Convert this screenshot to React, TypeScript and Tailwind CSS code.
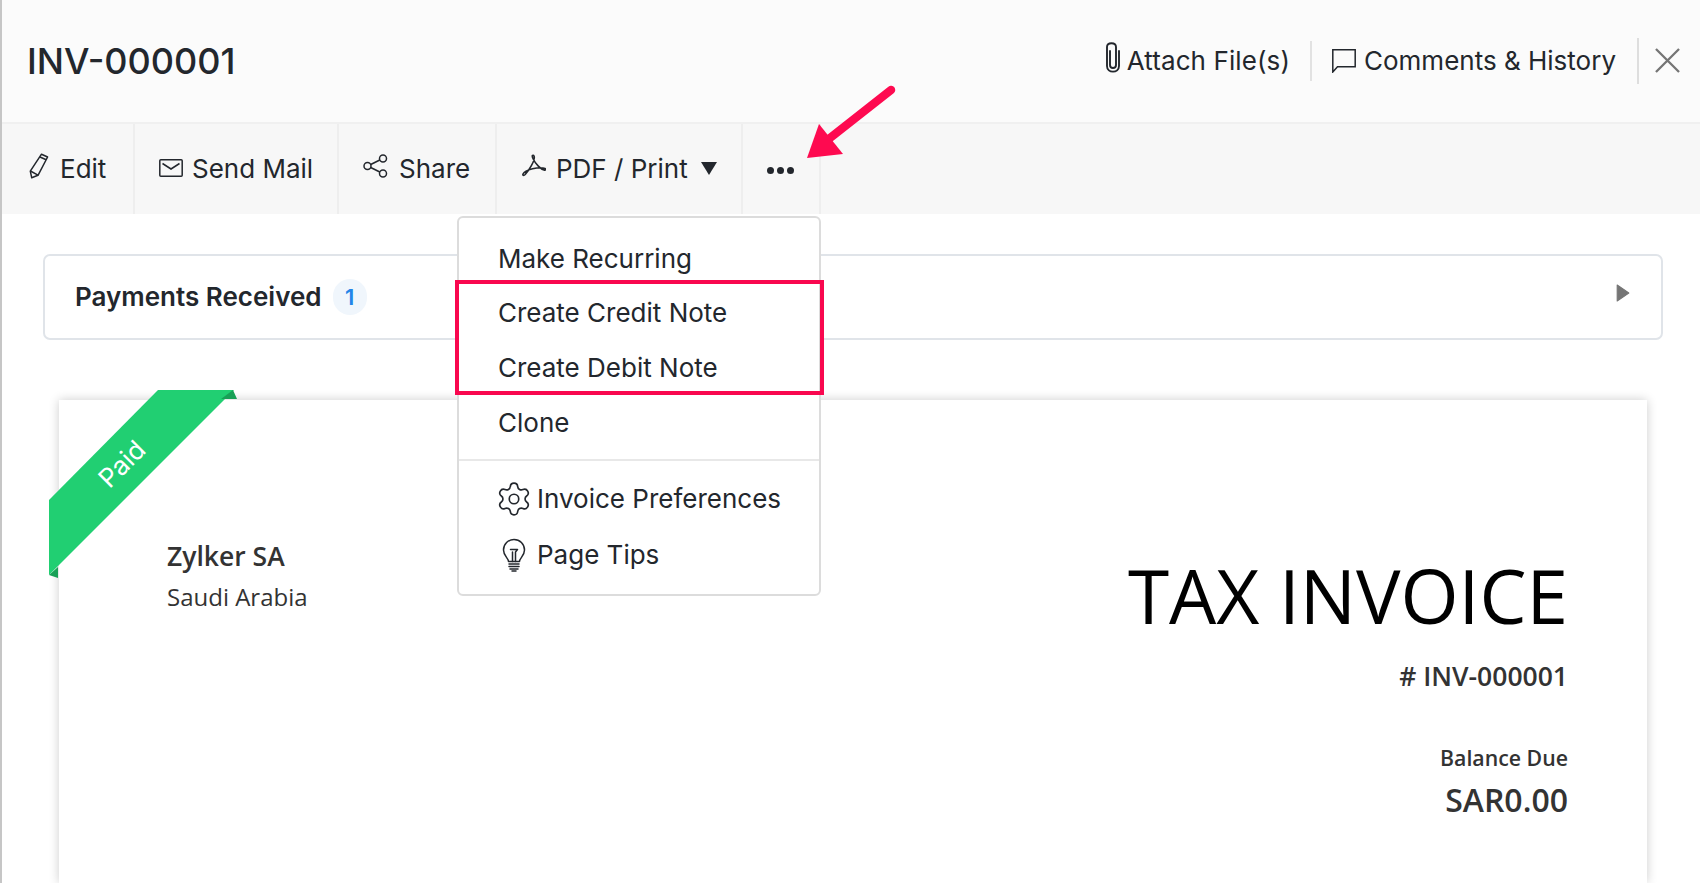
import React from "react";

const Pencil = () => (
  <svg width="20" height="26" viewBox="0 0 20 26" fill="none" stroke="#23272d" strokeWidth="1.5" strokeLinejoin="round" className="-mt-[4px] shrink-0">
    <path d="M12.5 1.2 18.6 4 9 22.3l-6.3 2.4-1.4-6.6z" />
    <path d="M11 4 17.2 6.8M1.4 18l7.6 4.200" />
  </svg>
);
const Mail = () => (
  <svg width="24" height="18" viewBox="0 0 24 18" fill="none" stroke="#23272d" strokeWidth="1.5" className="shrink-0">
    <rect x="0.8" y="0.8" width="22.4" height="16.4" rx="1" />
    <path d="M3.5 4.5 12 10l8.5-5.500" />
  </svg>
);
const Share = () => (
  <svg width="25" height="24" viewBox="0 0 25 24" fill="none" stroke="#23272d" strokeWidth="1.5" className="-mt-[4px] shrink-0">
    <circle cx="4.500" cy="12" r="3.500" />
    <circle cx="20" cy="4.500" r="3.500" />
    <circle cx="20" cy="19.500" r="3.500" />
    <path d="M7.700 10.500 16.800 6M7.700 13.500l9.100 4.500" />
  </svg>
);
const Pdf = () => (
  <svg width="24" height="24" viewBox="0 0 24 24" fill="none" stroke="#23272d" strokeWidth="1.6" strokeLinejoin="round" className="-mt-[4px] shrink-0">
    <path d="M10.500 1.500c1.500-.5 2 1 1.700 3-.4 3.500-4.500 11-9 16-1.500 1.500-2.800.8-2.200-.5 1-2 5-4 9.500-5.200 4.500-1 10-1.300 12.500-.3 1.500.7.600 2-1 1.500-3-.8-8.500-6-10.800-11-1-2-1.500-3-.7-3.500z" />
  </svg>
);
const Clip = () => (
  <svg width="16" height="31" viewBox="0 0 15 31" fill="none" stroke="#23272d" strokeWidth="1.900" strokeLinecap="round" className="shrink-0">
    <path d="M4.500 9v14c0 4 6 4 6 0V5c0-5-9-5-9 0v19c0 7.500 12 7.500 12 0V9" />
  </svg>
);
const Comment = () => (
  <svg width="24" height="24" viewBox="0 0 24 24" fill="none" stroke="#23272d" strokeWidth="1.500" strokeLinejoin="miter" className="shrink-0">
    <path d="M.8.800h22.400v17H5.500L.8 23z" />
  </svg>
);
const Gear = () => (
  <svg width="38" height="38" viewBox="0 0 24 24" fill="none" stroke="#23272d" strokeWidth="1.050" strokeLinecap="round" strokeLinejoin="round" className="-mr-[3px] -ml-[3px] shrink-0">
    <path d="M9.671 4.136a2.340 2.340 0 0 1 4.659 0 2.340 2.340 0 0 0 3.319 1.915 2.340 2.340 0 0 1 2.330 4.033 2.340 2.340 0 0 0 0 3.831 2.340 2.340 0 0 1-2.330 4.033 2.340 2.340 0 0 0-3.319 1.915 2.340 2.340 0 0 1-4.659 0 2.340 2.340 0 0 0-3.320-1.915 2.340 2.340 0 0 1-2.330-4.033 2.340 2.340 0 0 0 0-3.831A2.340 2.340 0 0 1 6.350 6.051a2.340 2.340 0 0 0 3.320-1.915" />
    <circle cx="12" cy="12" r="3" />
  </svg>
);
const Bulb = () => (
  <svg width="32" height="34" viewBox="0 0 32 34" fill="none" stroke="#23272d" strokeWidth="1.500" strokeLinecap="round" strokeLinejoin="round" className="shrink-0">
    <path d="M10.500 23.500c0-3.500-5-5.500-5-11.500a10.500 10.500 0 0 1 21 0c0 6-5 8-5 11.500z" />
    <path d="M12.500 11.500h7l-2 2.500v9.500M14.500 14v9.500" />
    <path d="M11 26h10M11 28.500h10M12 31h8M14 33h4" />
  </svg>
);

const Tool = ({ icon, label, className }: { icon: React.ReactNode; label: string; className: string }) => (
  <div className={`flex h-full items-center border-r-2 border-[#eeeeee] pb-[2px] ${className}`}>
    {icon}
    <span>{label}</span>
  </div>
);

const MenuItem = ({ icon, children, className }: { icon?: React.ReactNode; children: React.ReactNode; className: string }) => (
  <div className={`flex items-center pl-[39px] ${className}`}>
    {icon}
    <span>{children}</span>
  </div>
);

export default function App() {
  return (
    <div className="relative flex h-screen flex-col overflow-hidden border-l-2 border-[#c6c6c6] bg-white font-['Inter',sans-serif] text-[#23272d]">
      <header className="flex h-[124px] shrink-0 items-center border-b-2 border-[#f0f0f0] bg-[#fbfbfb] pb-[1px] pl-[25px]">
        <h1 className="text-[36px] leading-none font-medium">INV-000001</h1>
        <div className="ml-auto flex items-center text-[26px]">
          <div className="flex items-center gap-[6px]">
            <span className="-mt-[6px] flex"><Clip /></span>
            <span className="tracking-[0.1px]">Attach File(s)</span>
          </div>
          <div className="ml-[20px] h-[40px] w-[2px] bg-[#e2e2e2]" />
          <div className="ml-[20px] flex items-center gap-[8px]">
            <Comment />
            <span>Comments &amp; History</span>
          </div>
          <div className="ml-[21px] h-[46px] w-[2px] bg-[#dedede]" />
          <svg width="25" height="25" viewBox="0 0 26 26" stroke="#757575" strokeWidth="2.400" className="mr-[20px] ml-[16px]">
            <path d="M1 1l24 24M25 1 1 25" />
          </svg>
        </div>
      </header>

      <nav className="flex h-[90px] shrink-0 items-center bg-[#f7f7f7] text-[26px]">
        <Tool className="w-[133px] gap-[11px] pl-[27px]" icon={<Pencil />} label="Edit" />
        <Tool className="w-[204px] gap-[9px] pl-[24px]" icon={<Mail />} label="Send Mail" />
        <Tool className="w-[158px] gap-[11px] pl-[24px]" icon={<Share />} label="Share" />
        <div className="flex h-full w-[246px] items-center border-r-2 border-[#eeeeee] pb-[2px] pl-[25px]">
          <Pdf />
          <span className="ml-[10px]">PDF / Print</span>
          <svg width="16" height="13" viewBox="0 0 16 13" fill="#23272d" className="ml-[13px]"><path d="M0 0h16L8 13z" /></svg>
        </div>
        <div className="flex h-full w-[78px] items-center gap-[3px] border-r-2 border-[#eeeeee] pt-[3px] pl-[24px]">
          <span className="h-[7px] w-[7px] rounded-full bg-[#23272d]" />
          <span className="h-[7px] w-[7px] rounded-full bg-[#23272d]" />
          <span className="h-[7px] w-[7px] rounded-full bg-[#23272d]" />
        </div>
      </nav>

      <main className="flex min-h-0 flex-1 flex-col">
        <section className="mt-[40px] mr-[37px] ml-[41px] flex h-[86px] shrink-0 items-center rounded-[7px] border-2 border-[#e0e4e9] pr-[31px] pl-[30px]">
          <span className="text-[26px] leading-none font-semibold">Payments Received</span>
          <span className="ml-[11px] flex h-[36px] w-[34px] items-center justify-center rounded-full bg-[#f0f6fc] text-[22px] font-semibold text-[#2485e8]">1</span>
          <svg width="14" height="18" viewBox="0 0 13 17" fill="#757575" stroke="#757575" strokeWidth="1" strokeLinejoin="round" className="mb-[8px] ml-auto"><path d="M1 1v15l11-7.500z" /></svg>
        </section>

        <section className="relative mt-[60px] mr-[53px] ml-[57px] flex flex-1 justify-between bg-white font-['Open_Sans',sans-serif] text-[#333333] shadow-[0_0_10px_rgba(0,0,0,0.2)]">
          <div className="pt-[138px] pl-[108px]">
            <div className="text-[26.500px] leading-[36px] font-semibold">Zylker SA</div>
            <div className="mt-[6px] text-[24px] leading-[34px]">Saudi Arabia</div>
          </div>
          <div className="pt-[150px] pr-[79px] text-right">
            <div className="text-[74.700px] leading-[90px] text-black">TAX INVOICE</div>
            <div className="mt-[18px] text-[26.500px] leading-[36px] font-semibold">#&nbsp;INV-000001</div>
            <div className="mt-[49px] text-[21.300px] leading-[30px] font-semibold">Balance Due</div>
            <div className="mt-[5px] text-[32px] leading-[44px] font-semibold">SAR0.00</div>
          </div>
        </section>
      </main>

      <svg width="200" height="200" viewBox="0 0 200 200" className="absolute top-[390px] left-[45px]">
        <path d="M111 0h76L2 185v-75z" fill="#21cf72" />
        <path d="M174 9 186 0l4 9zM2 185l9-8v11z" fill="#18a056" />
      </svg>
      <span className="absolute top-[450px] left-[90px] w-[60px] -rotate-45 text-center font-['Inter',sans-serif] text-[26px] leading-[28px] text-white">Paid</span>

      <div className="absolute top-[216px] left-[455px] flex h-[380px] w-[364px] flex-col rounded-[6px] border-2 border-[#dcdcdc] bg-white pt-[13px] text-[26px]">
        <MenuItem className="h-[54px]">Make Recurring</MenuItem>
        <MenuItem className="h-[55px]">Create Credit Note</MenuItem>
        <MenuItem className="h-[55px]">Create Debit Note</MenuItem>
        <MenuItem className="h-[54px]">Clone</MenuItem>
        <div className="mt-[10px] h-[2px] bg-[#e8e8e8]" />
        <MenuItem className="mt-[10px] h-[55px] gap-[7px]" icon={<Gear />}>Invoice Preferences</MenuItem>
        <MenuItem className="h-[57px] gap-[7px]" icon={<Bulb />}>Page Tips</MenuItem>
      </div>
      <div className="absolute top-[280px] left-[453px] h-[115px] w-[369px] border-[4px] border-[#f9074f]" />

      <svg width="100" height="90" viewBox="0 0 100 90" className="absolute top-[80px] left-[796px]">
        <path d="M93 10 32 58" stroke="#fe0a50" strokeWidth="8.500" strokeLinecap="round" />
        <path d="M9 78 21 44l24 30z" fill="#fe0a50" />
      </svg>
    </div>
  );
}
